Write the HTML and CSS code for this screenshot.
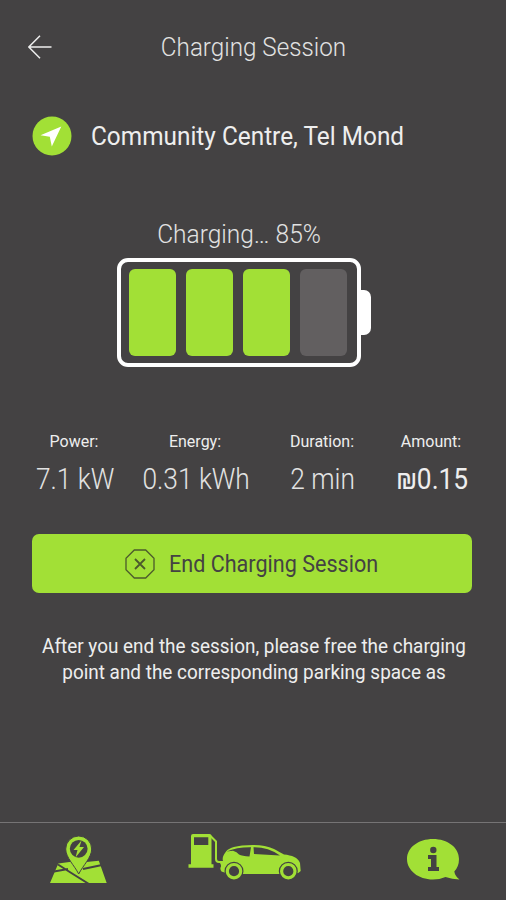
FILE: index.html
```html
<!DOCTYPE html>
<html lang="en">
<head>
<meta charset="utf-8">
<title>Charging Session</title>
<link rel="stylesheet" href="styles.css">
</head>
<body>
<div class="app">
  <header class="header">
    <svg class="back" width="24" height="24" viewBox="0 0 24 24"><path d="M23.500 12H1M12 .8L.8 12 12 23.200"/></svg>
    <h1 class="title">Charging Session</h1>
  </header>
  <section class="location">
    <svg class="nav-icon" width="40" height="40" viewBox="0 0 40 40"><circle cx="20" cy="20" r="19.500"/><path d="M29.300 10.500L8.500 19.200l9.300 1.600 2 9.700z"/></svg>
    <h2 class="place">Community Centre, Tel Mond</h2>
  </section>
  <section class="charge">
    <p class="status">Charging… 85%</p>
    <div class="battery">
      <div class="cells">
        <span class="cell full"></span><span class="cell full"></span><span class="cell full"></span><span class="cell"></span>
      </div>
      <span class="cap"></span>
    </div>
  </section>
  <section class="stats">
    <div class="stat power"><span class="label">Power:</span><span class="value">7.1 kW</span></div>
    <div class="stat energy"><span class="label">Energy:</span><span class="value">0.31 kWh</span></div>
    <div class="stat duration"><span class="label">Duration:</span><span class="value">2 min</span></div>
    <div class="stat amount"><span class="label">Amount:</span><span class="value">₪0.15</span></div>
  </section>
  <button class="end">
    <svg width="30" height="30" viewBox="0 0 30 30"><path class="octagon" d="M9.300 1h11.400L29 9.300v11.400L20.700 29H9.300L1 20.700V9.300z"/><path class="cross" d="M10 10l10 10M20 10L10 20"/></svg>
    <span class="end-text">End Charging Session</span>
  </button>
  <p class="note">After you end the session, please free the charging<br>point and the corresponding parking space as</p>
  <nav class="tabs">
    <svg class="tab map" width="60" height="48" viewBox="0 0 60 48">
      <path d="M9.300 27.500l11-1.500h17l12.500-1.200 7.900 22.200H1z"/>
      <path class="cut" d="M9 28.500l12.500 8L40 48M5 35.500l14-2.500M34 33l19-4"/>
      <path class="pin" d="M29.700 38C25.500 29.500 16.700 21.500 16.700 13a13 13 0 0 1 26 0c0 8.500-8.800 16.500-13 25z"/>
      <circle class="hole" cx="29.700" cy="12.800" r="8.900"/>
      <path d="M32.500 4.500L24.500 14h4l-2 7.500 8.500-10.500H30.500z"/>
    </svg>
    <svg class="tab car" width="114" height="48" viewBox="0 0 114 48">
      <path fill-rule="evenodd" d="M3 30.300V2Q3 0 5 0h16.500q2 0 2 2v28.300h2v3.400H.5v-3.400zM6 3.300V11h14.300V3.300z"/>
      <path class="hose" d="M22.500 2l5.500 5.500V25q0 3 3 3h4"/>
      <path d="M33.500 37.500q-2-3-.5-5 .2-2-1-3.500 1-2 3-2c-1-3 .5-6 2-8 3-5 9-6.500 17-7.500 13-1.400 23-.5 32 3.500 4 2 7 4 10 5.500 8 .8 14 3 16 8.500l.7 8-2.500 2-7 1H41z"/>
      <path class="glass" d="M38.500 17.500Q49 13 63 13.200L61.500 22.500Q54 22 51 20.500 49 18 45 16.800zM65.500 13.300Q80 13 92 21.500L66 20z"/>
      <g class="wheel"><circle cx="46" cy="37.200" r="7.500"/><circle cx="100.300" cy="37.200" r="7.500"/></g>
      <g class="rim"><circle cx="46" cy="37.200" r="6.700"/><circle cx="100.300" cy="37.200" r="6.700"/></g>
    </svg>
    <svg class="tab info" width="54" height="44" viewBox="0 0 54 44">
      <path d="M26 0C11.500 0 0 8.500 0 20s11.500 20.500 26 20.500q6.500 0 12.500-2.500Q45 40 52.500 40.500q-4.500-3.500-5.200-8Q52 27.500 52 20C52 8.500 40.500 0 26 0z"/>
      <path class="letter" d="M21 16h8.500v12H32v4H21v-4h3v-8h-3z"/><circle class="letter" cx="26.300" cy="11" r="3.200"/>
    </svg>
  </nav>
</div>
</body>
</html>
```

FILE: styles.css
```css
* { box-sizing: border-box; margin: 0; padding: 0; }
body { background: #444243; font-family: Roboto, "Liberation Sans", sans-serif; color: #eee; }
.app { height: 900px; display: flex; flex-direction: column; overflow: hidden; }
.header { height: 94px; display: grid; grid-template-columns: 147px 213px 1fr; align-items: center; }
.back { margin-left: 28px; fill: none; stroke: #eee; stroke-width: 1.5; }
.title { font-size: 25px; font-weight: 300; text-align: center; white-space: nowrap; color: #e2e2e2; transform: scaleX(.969); }
.location { height: 84px; display: flex; align-items: center; padding-left: 32px; gap: 19px; }
.nav-icon { fill: #a2e036; }
.nav-icon path { fill: #fff; }
.place { font-size: 25px; font-weight: 400; white-space: nowrap; transform: scaleX(.975); transform-origin: left; }
.charge { padding-top: 39px; }
.status { width: 478px; height: 34px; line-height: 35px; font-size: 25px; font-weight: 300; text-align: center; color: #e2e2e2; transform: scaleX(.98); }
.battery { margin: 7px 0 0 117px; display: flex; align-items: center; }
.cells { width: 244px; height: 109px; border: 4px solid #fff; border-radius: 11px; display: grid; grid-template-columns: repeat(4, 47px); gap: 10px; padding: 7px 8px; }
.cell { height: 87px; border-radius: 6px; background: #625f60; }
.full { background: #a2e036; }
.cap { width: 10px; height: 45px; background: #fff; border-radius: 0 7px 7px 0; }
.stats { margin-top: 61px; padding-left: 20px; display: grid; grid-template-columns: 108px 134px 120px 98px; height: 74px; }
.stat { display: flex; flex-direction: column; align-items: center; white-space: nowrap; }
.label { font-size: 16px; line-height: 27px; }
.value { font-size: 29px; line-height: 49px; font-weight: 300; color: #e2e2e2; padding-left: 2px; transform: scaleX(.907); }
.amount .value { font-weight: 400; color: #eee; }
.end { margin: 32px 34px 0 32px; height: 59px; flex: none; border: 0; border-radius: 7px; background: #a2e036; display: flex; align-items: center; padding-left: 93px; gap: 14px; color: #444243; font: 400 23px Roboto, sans-serif; }
.end svg { fill: none; stroke: #4c5b2c; }
.octagon { stroke-width: 1.3; }
.cross { stroke-width: 1.8; }
.end-text { padding-top: 2px; transform: scaleX(.938); transform-origin: left; }
.note { margin-top: 40px; width: 508px; text-align: center; font-size: 20px; line-height: 26px; white-space: nowrap; transform: scaleX(.946); }
.tabs { margin-top: auto; height: 78px; border-top: 1px solid #767475; display: grid; grid-template-columns: 188px 219px 1fr; align-items: start; fill: #a2e036; }
.map { margin: 13px 0 0 49px; }
.car { margin-top: 11px; }
.info { margin-top: 16px; }
.hole, .letter, .glass { fill: #444243; }
.cut { fill: none; stroke: #444243; stroke-width: 2; }
.pin { stroke: #444243; stroke-width: 1; }
.hose { fill: none; stroke: #a2e036; stroke-width: 2; }
.wheel { fill: #444243; stroke: #444243; stroke-width: 4; }
.rim { fill: #444243; stroke: #a2e036; stroke-width: 3.2; }
```
